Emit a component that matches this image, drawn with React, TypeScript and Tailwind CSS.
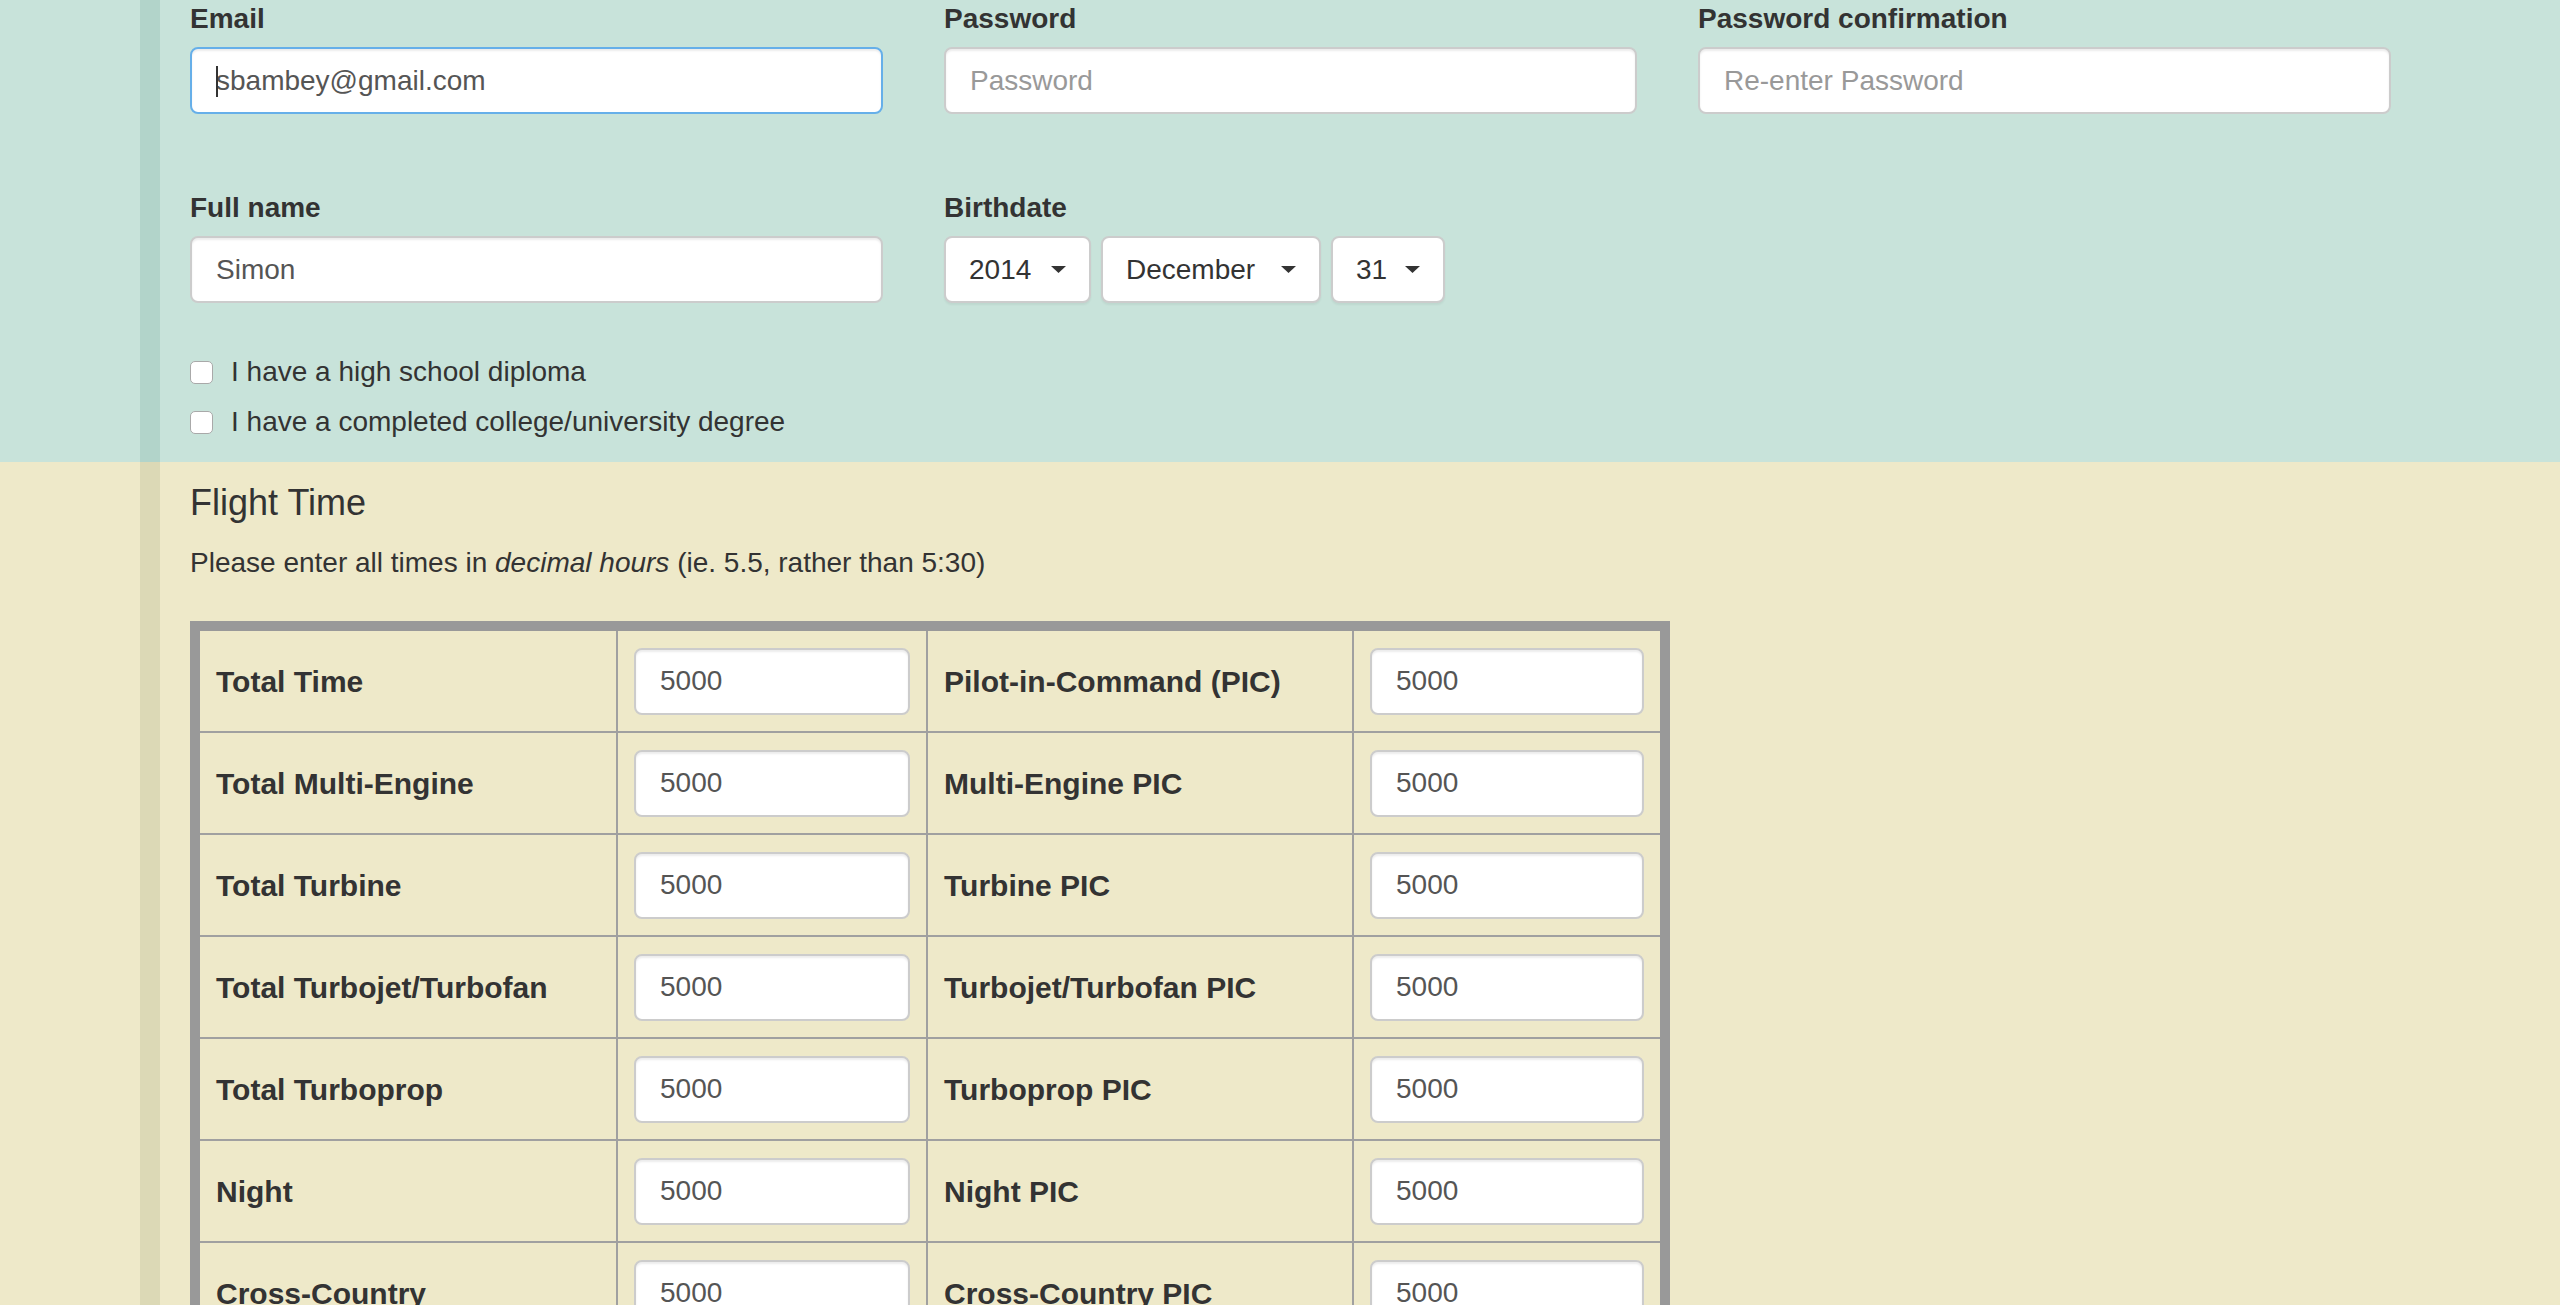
import React from "react";

const flightRows: [string, string][] = [
  ["Total Time", "Pilot-in-Command (PIC)"],
  ["Total Multi-Engine", "Multi-Engine PIC"],
  ["Total Turbine", "Turbine PIC"],
  ["Total Turbojet/Turbofan", "Turbojet/Turbofan PIC"],
  ["Total Turboprop", "Turboprop PIC"],
  ["Night", "Night PIC"],
  ["Cross-Country", "Cross-Country PIC"],
  ["Instrument", "Instrument PIC"],
];

const inputCls =
  "block w-full h-[67px] rounded-[8px] border-2 border-[#ccc] bg-white px-[24px] text-[28px] text-[#555] shadow-[inset_0_2px_2px_rgba(0,0,0,0.075)] outline-none placeholder:text-[#999]";

const Field = ({ label, children }: { label: string; children: React.ReactNode }) => (
  <div>
    <label className="mb-[9px] block text-[28px] font-bold leading-[38px]">{label}</label>
    {children}
  </div>
);

const Caret = () => (
  <svg width="15" height="7" viewBox="0 0 15 7" className="shrink-0 fill-[#333]">
    <path d="M0 0h15L7.5 7z" />
  </svg>
);

const FakeSelect = ({ value, width }: { value: string; width: string }) => (
  <div
    className={`flex h-[67px] items-center justify-between rounded-[8px] border-2 border-[#ccc] bg-white pl-[23px] pr-[23px] text-[28px] text-[#333] shadow-[0_2px_2px_rgba(0,0,0,0.05)] ${width}`}
  >
    <span>{value}</span>
    <Caret />
  </div>
);

const Check = ({ label }: { label: string }) => (
  <div className="flex h-[40px] items-center gap-[18px] text-[28px]">
    <span className="block h-[23px] w-[23px] rounded-[5px] border-[1.5px] border-[#a9a9a9] bg-white" />
    <span>{label}</span>
  </div>
);

export default function App() {
  return (
    <div className="h-[1305px] overflow-hidden font-['Liberation_Sans',Arial,sans-serif] text-[#333]">
      {/* account section */}
      <section className="bg-[#c8e3da]">
        <div className="ml-[140px] border-l-[20px] border-[#b2d4ca] pb-[20px] pl-[30px]">
          <div className="grid w-[2201px] grid-cols-[693px_693px_693px] gap-x-[61px]">
            <Field label="Email">
              <div className="relative">
                <input
                  type="email"
                  defaultValue="sbambey@gmail.com"
                  className={`${inputCls} !border-[#66afe9] shadow-[inset_0_2px_2px_rgba(0,0,0,0.075),0_0_16px_rgba(102,175,233,0.6)]`}
                />
                <span className="absolute left-[26px] top-[19px] h-[31px] w-[2px] bg-[#333]" />
              </div>
            </Field>
            <Field label="Password">
              <input type="password" placeholder="Password" className={inputCls} />
            </Field>
            <Field label="Password confirmation">
              <input type="password" placeholder="Re-enter Password" className={inputCls} />
            </Field>
          </div>

          <div className="mt-[75px] grid w-[2201px] grid-cols-[693px_693px_693px] gap-x-[61px]">
            <Field label="Full name">
              <input type="text" defaultValue="Simon" className={inputCls} />
            </Field>
            <Field label="Birthdate">
              <div className="flex gap-[10px]">
                <FakeSelect value="2014" width="w-[147px]" />
                <FakeSelect value="December" width="w-[220px]" />
                <FakeSelect value="31" width="w-[114px]" />
              </div>
            </Field>
          </div>

          <div className="mt-[49px] flex flex-col gap-[10px]">
            <Check label="I have a high school diploma" />
            <Check label="I have a completed college/university degree" />
          </div>
        </div>
      </section>

      {/* flight time */}
      <section className="bg-[#eee9c9]">
        <div className="ml-[140px] border-l-[20px] border-[#dcd9b6] pb-[40px] pl-[30px] pt-[21px]">
          <h4 className="text-[36px] font-medium leading-[40px]">Flight Time</h4>
          <p className="mt-[20px] text-[28px] leading-[40px]">
            Please enter all times in <em>decimal hours</em> (ie. 5.5, rather than 5:30)
          </p>

          <div className="mt-[38px] w-[1480px] border-[10px] border-[#999]">
            {flightRows.map(([left, right]) => (
              <div
                key={left}
                className="grid grid-cols-[418px_310px_426px_306px] border-b-2 border-[#a0a0a0]"
              >
                <div className="flex h-[100px] items-center border-r-2 border-[#a0a0a0] px-[16px] text-[30px] font-bold">
                  {left}
                </div>
                <div className="flex h-[100px] items-center border-r-2 border-[#a0a0a0] px-[16px]">
                  <input type="text" defaultValue="5000" className={inputCls} />
                </div>
                <div className="flex h-[100px] items-center border-r-2 border-[#a0a0a0] px-[16px] text-[30px] font-bold">
                  {right}
                </div>
                <div className="flex h-[100px] items-center px-[16px]">
                  <input type="text" defaultValue="5000" className={inputCls} />
                </div>
              </div>
            ))}
          </div>
        </div>
      </section>
    </div>
  );
}
